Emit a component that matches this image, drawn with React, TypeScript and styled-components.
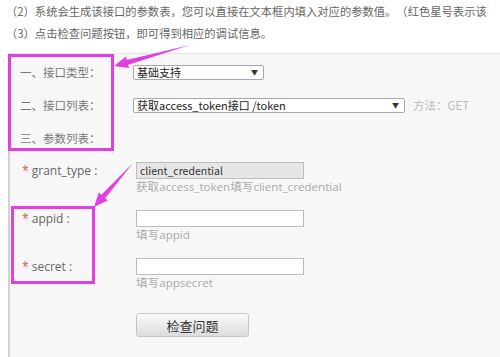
import styled, {createGlobalStyle} from "styled-components";

const GlobalStyle = createGlobalStyle`
 html, body {
  margin: 0;
  padding: 0;
  background: #fff;
 }
 body {
  font-family: "Noto Sans CJK SC", "Noto Sans", sans-serif;
  text-spacing-trim: space-all;
 }
`;

const params = [
 {name: "grant_type", value: "client_credential", hint: "获取access_token填写client_credential", locked: true},
 {name: "appid", value: "", hint: "填写appid", locked: false},
 {name: "secret", value: "", hint: "填写appsecret", locked: false},
];

const App = () => {
 return (
  <Page>
   <GlobalStyle />
   <Intro>
    <IntroLine>（2）系统会生成该接口的参数表，您可以直接在文本框内填入对应的参数值。（红色星号表示该</IntroLine>
    <IntroLine>（3）点击检查问题按钮，即可得到相应的调试信息。</IntroLine>
   </Intro>

   <Panel>
    <Head>
     <HeadRow>
      <HeadLabel>一、接口类型：</HeadLabel>
      <Select w={131}>
       <span>基础支持</span>
       <Caret>▼</Caret>
      </Select>
     </HeadRow>
     <HeadRow>
      <HeadLabel>二、接口列表：</HeadLabel>
      <Cell>
       <Select w={272}>
        <span>获取access_token接口 /token</span>
        <Caret>▼</Caret>
       </Select>
       <Method>方法：GET</Method>
      </Cell>
     </HeadRow>
     <HeadRow>
      <HeadLabel>三、参数列表：</HeadLabel>
     </HeadRow>
    </Head>

    <Params>
     {params.map(p => (
      <ParamRow key={p.name}>
       <ParamLabel><Star>*</Star> {p.name} :</ParamLabel>
       <div>
        <Field readOnly={p.locked} locked={p.locked} defaultValue={p.value} />
        <Hint>{p.hint}</Hint>
       </div>
      </ParamRow>
     ))}
     <CheckButton>检查问题</CheckButton>
    </Params>
   </Panel>

   <Mark style={{left: 8, top: 54, width: 106, height: 97}} />
   <Mark style={{left: 11, top: 206, width: 84, height: 78}} />
   <Arrows width="500" height="357" viewBox="0 0 500 357">
    <polygon points="114,66 125.9,56.5 126.8,59.9 190,45 128.2,64.7 129.1,68.1" />
    <polygon points="94,207 98.8,192.5 101.4,194.8 133,163 105.2,198.2 107.8,200.5" />
   </Arrows>
  </Page>
 );
};

export default App;

const Page = styled.div`
 position: relative;
 width: 500px;
 height: 357px;
 overflow: hidden;
`;

const Intro = styled.div`
 padding-left: 6px;
`;

const IntroLine = styled.div`
 font-size: 11.3px;
 line-height: 22px;
 color: #666;
 white-space: nowrap;
 text-spacing-trim: space-all;
 font-feature-settings: "chws" 0, "halt" 0;
`;

const Panel = styled.div`
 margin: 9px 0 0 8px;
 height: 304px;
 background: #f7f7f7;
 border-top: 1px solid #e4e4e4;
 border-left: 2px solid #d2d2d2;
 box-sizing: border-box;
`;

const Head = styled.div`
 display: flex;
 flex-direction: column;
 gap: 13px;
 padding-top: 8px;
`;

const HeadRow = styled.div`
 display: grid;
 grid-template-columns: 123px 1fr;
 align-items: center;
 height: 20px;
`;

const HeadLabel = styled.span`
 padding-left: 10px;
 font-size: 11.5px;
 color: #777;
`;

const Cell = styled.div`
 display: flex;
 align-items: center;
 gap: 8px;
`;

const Select = styled.div<{w: number}>`
 width: ${({w}) => w}px;
 height: 15px;
 box-sizing: border-box;
 display: flex;
 align-items: center;
 justify-content: space-between;
 padding: 0 5px 0 3px;
 background: #fff;
 border: 1px solid #a8a8a8;
 border-radius: 2px;
 font-size: 11px;
 color: #222;
 white-space: nowrap;
`;

const Caret = styled.span`
 font-size: 7px;
 color: #333;
`;

const Method = styled.span`
 font-size: 11.5px;
 color: #bbb;
`;

const Params = styled.div`
 margin-top: 14px;
 padding-left: 12px;
`;

const ParamRow = styled.div`
 display: grid;
 grid-template-columns: 114px 1fr;
 margin-bottom: 15px;
`;

const ParamLabel = styled.span`
 font-family: "Open Sans", "Noto Sans", sans-serif;
 font-size: 12px;
 line-height: 17px;
 color: #666;
`;

const Star = styled.span`
 color: #e44;
`;

const Field = styled.input<{locked: boolean}>`
 display: block;
 width: 168px;
 height: 17px;
 box-sizing: border-box;
 margin: 0;
 padding: 0 3px;
 border: 1px solid #bdbdbd;
 background: ${({locked}) => (locked ? "#e6e6e6" : "#fff")};
 font-family: "Noto Sans CJK SC", sans-serif;
 font-size: 10.5px;
 color: #333;
 outline: none;
`;

const Hint = styled.div`
 font-family: "Open Sans", "Noto Sans CJK SC", sans-serif;
 font-size: 11.6px;
 line-height: 16px;
 color: #aaa;
 white-space: nowrap;
`;

const CheckButton = styled.button`
 margin: 7px 0 0 114px;
 width: 113px;
 height: 24px;
 border: 1px solid #c6c6c6;
 border-radius: 3px;
 background: linear-gradient(#fbfbfb, #dcdcdc);
 font-family: "Noto Sans CJK SC", sans-serif;
 font-size: 13px;
 color: #333;
 cursor: pointer;
`;

const Mark = styled.div`
 position: absolute;
 box-sizing: border-box;
 border: 3px solid #e23fe3;
`;

const Arrows = styled.svg`
 position: absolute;
 left: 0;
 top: 0;
 pointer-events: none;
 fill: #e23fe3;
`;
